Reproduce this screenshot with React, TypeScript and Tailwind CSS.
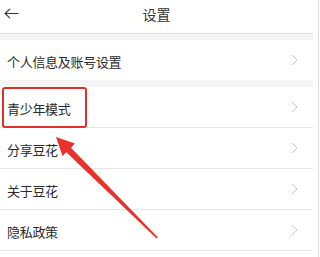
const ROWS = ["青少年模式", "分享豆花", "关于豆花", "隐私政策"];

const FONT = { fontFamily: '"Noto Sans CJK SC", "Noto Sans", sans-serif' };

function Chevron() {
  return (
    <svg width="7" height="12" viewBox="0 0 7 12" fill="none" stroke="#c6c6c6" strokeWidth="1">
      <path d="M0.8 0.8L6 6L0.8 11.2" />
    </svg>
  );
}

function Row({ label, border }: { label: string; border?: boolean }) {
  return (
    <div
      className={
        "flex items-center justify-between bg-white pl-[7px] pr-[15px] " +
        (border ? "h-[41px] border-b border-[#e6e6e6]" : "h-[40px]")
      }
    >
      <span className="pt-[4px] text-[13px] tracking-[-0.3px] text-[#2a2a2a]">{label}</span>
      <Chevron />
    </div>
  );
}

export default function App() {
  return (
    <div className="relative flex h-[257px] w-[320px] overflow-hidden bg-white" style={FONT}>
      <div className="flex w-[313px] flex-col">
        <div className="relative flex h-[34px] items-center justify-center border-b border-[#e2e2e2]">
          <svg
            className="absolute left-[4px] top-[8px]"
            width="15"
            height="11"
            viewBox="0 0 15 11"
            fill="none"
            stroke="#333"
            strokeWidth="1.1"
          >
            <path d="M14.5 5.5H1M6 0.8L1 5.5L6 10.2" />
          </svg>
          <span className="mb-[4px] text-[14px] text-[#333]">设置</span>
        </div>
        <div className="h-[6px] bg-[#f4f4f4]" />
        <Row label="个人信息及账号设置" />
        <div className="h-[7px] bg-[#f4f4f4]" />
        {ROWS.map((r) => (
          <Row key={r} label={r} border />
        ))}
      </div>
      <div className="ml-[5px] w-px bg-[#dcdcdc]" />

      {/* highlight box */}
      <div className="absolute left-[2px] top-[87px] h-[41px] w-[85px] rounded-[3px] border-[2.5px] border-[#e0302a]" />

      {/* annotation arrow */}
      <svg className="absolute left-0 top-0" width="320" height="257" viewBox="0 0 320 257">
        <polygon
          points="56,137 75,143.5 71,147.8 157.8,237.3 156.6,238.6 66.3,152.3 62.5,156"
          fill="#e8322b"
        />
      </svg>
    </div>
  );
}
